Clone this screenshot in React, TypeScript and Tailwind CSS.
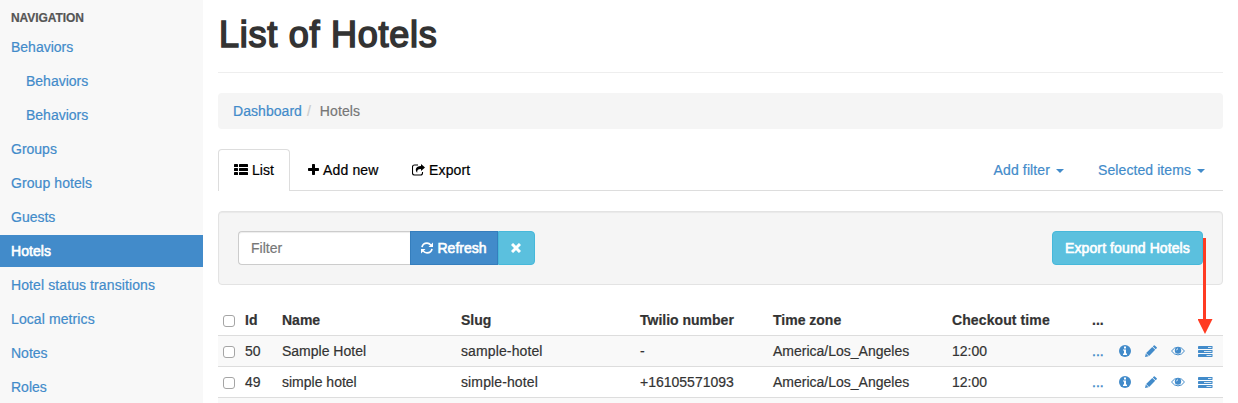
import type { ReactNode } from 'react';

const navItems = [
  { label: 'Behaviors', spacing: 'tracking-[0]' },
  { label: 'Behaviors', nested: true, spacing: 'tracking-[0]' },
  { label: 'Behaviors', nested: true, spacing: 'tracking-[0]' },
  { label: 'Groups', spacing: 'tracking-[0]' },
  { label: 'Group hotels', spacing: 'tracking-[0.08px]' },
  { label: 'Guests', spacing: 'tracking-[0]' },
  { label: 'Hotels', active: true, spacing: 'tracking-[0.05px]' },
  { label: 'Hotel status transitions', spacing: 'tracking-[0.1px]' },
  { label: 'Local metrics', spacing: 'tracking-[0.1px]' },
  { label: 'Notes', spacing: 'tracking-[0]' },
  { label: 'Roles', spacing: 'tracking-[0]' },
];

const hotels = [
  { id: 50, name: 'Sample Hotel', slug: 'sample-hotel', phone: '-' },
  { id: 49, name: 'simple hotel', slug: 'simple-hotel', phone: '+16105571093' },
];

const columns = 'grid grid-cols-[27px_37px_179px_179px_133px_179px_140px_27px_26px_26px_27px_1fr]';

function ThListIcon() {
  return (
    <svg width="14" height="12" viewBox="0 0 14 12" fill="currentColor">
      {[0, 4, 8].map((y) => (
        <g key={y}>
          <rect x="0" y={y} width="4" height="3" rx="0.6" />
          <rect x="5" y={y} width="9" height="3" rx="0.6" />
        </g>
      ))}
    </svg>
  );
}

function PlusIcon() {
  return (
    <svg width="11" height="11" viewBox="0 0 11 11" fill="currentColor">
      <path d="M4.7 0h1.6q.7 0 .7.7V4h3.3q.7 0 .7.7v1.6q0 .7-.7.7H7v3.3q0 .7-.7.7H4.7q-.7 0-.7-.7V7H.7Q0 7 0 6.300V4.700Q0 4 .7 4H4V.7Q4 0 4.700 0z" />
    </svg>
  );
}

function ShareIcon() {
  return (
    <svg width="13" height="12" viewBox="0 0 13 12" fill="none">
      <path d="M6 1H2.500Q.5 1 .5 3v6q0 2 2 2H8.500q2 0 2-2V8" stroke="currentColor" strokeWidth="1.100" />
      <path d="M9 0l4 3.400-4 3.500V4.900C6.300 4.800 4.900 5.600 5.200 8.700 2.700 6.200 3.400 2 9 2z" fill="currentColor" />
    </svg>
  );
}

function RefreshIcon() {
  return (
    <svg width="12" height="12" viewBox="0 0 12 12" fill="none">
      <path d="M1 5.200Q1.800 1.200 6 1.200 8.200 1.200 9.800 3M11 6.800Q10.200 10.800 6 10.800 3.800 10.800 2.200 9" stroke="currentColor" strokeWidth="1.700" />
      <path d="M12 .5V5H7.500zM0 11.500V7h4.500z" fill="currentColor" />
    </svg>
  );
}

function CloseIcon() {
  return (
    <svg width="10" height="10" viewBox="0 0 10 10" stroke="currentColor" strokeWidth="3" strokeLinecap="butt">
      <path d="M1 1l8 8M9 1L1 9" />
    </svg>
  );
}

function InfoIcon() {
  return (
    <svg width="12" height="12" viewBox="0 0 12 12">
      <circle cx="6" cy="6" r="6" fill="currentColor" />
      <path d="M5 1.500h2v2H5zM4 4.500h3v4h1V10H4V8.500h1v-3H4z" fill="#fff" />
    </svg>
  );
}

function PencilIcon() {
  return (
    <svg width="12" height="12" viewBox="0 0 12 12" fill="currentColor">
      <path d="M8.800 .4q.5-.5 1 0L11.700 2.300q.5.500 0 1l-1 1L7.800 1.400zM7.300 1.900l2.900 2.900-6.100 6.100L1.100 7.900zM.8 8.400l2.800 2.800L0 12z" />
    </svg>
  );
}

function EyeIcon() {
  return (
    <svg width="14" height="10" viewBox="0 0 14 10" fill="none">
      <path d="M.5 5Q3.200 1.200 7 1.200T13.500 5Q10.800 8.900 7 8.900T.5 5z" stroke="currentColor" strokeWidth="1" />
      <circle cx="7" cy="4.500" r="3.200" fill="currentColor" />
      <path d="M5.500 4.300Q5.700 2.900 7 2.700" stroke="#fff" strokeWidth=".8" />
    </svg>
  );
}

function TasksIcon() {
  return (
    <svg width="15" height="11" viewBox="0 0 15 11">
      {[0, 4, 8].map((y) => (
        <rect key={y} x="0" y={y} width="14.500" height="3" rx=".4" fill="currentColor" />
      ))}
      <path d="M10 1.500h3.500M6 5.500h7.500M8.500 9.500h5" stroke="#fff" strokeWidth=".8" />
    </svg>
  );
}

function Caret() {
  return <span className="mt-[2px] border-x-4 border-t-4 border-x-transparent border-t-[#428bca]" />;
}

function Checkbox() {
  return (
    <input
      type="checkbox"
      className="mt-px ml-[5px] h-3 w-3 appearance-none rounded-[3px] border border-[#a5a5a5] bg-white"
    />
  );
}

function Row({ children, className }: { children: ReactNode; className: string }) {
  return <div className={`${columns} items-center ${className}`}>{children}</div>;
}

export default function App() {
  return (
    <div className="flex h-[403px] w-[1238px] overflow-hidden bg-white font-['Liberation_Sans',Arial,sans-serif] text-[14px] leading-5 text-[#333] [-webkit-text-stroke:0.2px_currentColor]">
      <aside className="w-[203px] shrink-0 bg-[#f8f8f8]">
        <h2 className="h-[31px] pt-[8px] pl-[11px] text-[12px] font-bold text-[#555]">
          <span className="tracking-[-0.08px]">NAVIGATION</span>
        </h2>
        <nav className="flex flex-col gap-[2px]">
          {navItems.map((item, i) => (
            <a
              key={i}
              className={`flex h-8 items-center ${item.nested ? 'pl-[26px]' : 'pl-[11px]'} ${
                item.active ? 'bg-[#428bca] text-white [-webkit-text-stroke:0.6px_white]' : 'text-[#428bca] [-webkit-text-stroke:0.2px_#428bca]'
              } ${item.spacing}`}
            >
              {item.label}
            </a>
          ))}
        </nav>
      </aside>

      <main className="ml-[15px] w-[1005px] shrink-0">
        <header className="h-[73px] border-b border-[#eee] pt-[15px]">
          <h1 className="pl-px text-[36px] leading-10 tracking-[0.75px] [-webkit-text-stroke:1.6px_#333]">List of Hotels</h1>
        </header>

        <div className="mt-5 flex h-9 items-center rounded bg-[#f5f5f5] px-[15px]">
          <a className="tracking-[0.05px] text-[#428bca] [-webkit-text-stroke:0.2px_#428bca]">Dashboard</a>
          <span className="pr-[9px] pl-[5px] text-[#ccc] [-webkit-text-stroke:0.2px_#ccc]">/</span>
          <span className="text-[#777] tracking-[0.1px] [-webkit-text-stroke:0.2px_#777]">Hotels</span>
        </div>

        <div className="mt-5 flex h-[42px] border-b border-[#ddd] text-black">
          <div className="-mb-px flex w-[72px] items-center gap-1 rounded-t border border-b-0 border-[#ddd] bg-white pb-[2px] pl-[15px]">
            <ThListIcon />
            List
          </div>
          <div className="ml-[18px] flex w-[104px] items-center gap-1 tracking-[0.15px]">
            <PlusIcon />
            Add new
          </div>
          <div className="flex items-center gap-1 tracking-[0.15px]">
            <ShareIcon />
            Export
          </div>
          <div className="ml-auto flex items-center gap-[34px] pr-[18px] text-[#428bca] [-webkit-text-stroke:0.2px_#428bca]">
            <span className="flex items-center gap-[6px] tracking-[0.12px]">
              Add filter
              <Caret />
            </span>
            <span className="flex items-center gap-[6px] tracking-[0.08px]">
              Selected items
              <Caret />
            </span>
          </div>
        </div>

        <div className="mt-5 flex h-[74px] items-center justify-between rounded border border-[#e3e3e3] bg-[#f5f5f5] px-[19px] shadow-[inset_0_1px_1px_rgba(0,0,0,0.05)]">
          <div className="flex h-[34px]">
            <input
              placeholder="Filter"
              className="w-[172px] rounded-l border border-r-0 border-[#ccc] bg-white px-3 shadow-[inset_0_1px_1px_rgba(0,0,0,0.075)] [-webkit-text-stroke:0.2px_#777] placeholder:text-[#777]"
            />
            <button className="flex w-[88px] items-center justify-center gap-1 border border-[#357ebd] bg-[#428bca] text-white [-webkit-text-stroke:0.6px_white]">
              <RefreshIcon />
              Refresh
            </button>
            <button className="flex w-[37px] items-center justify-center rounded-r border border-[#46b8da] bg-[#5bc0de] pr-px text-white">
              <CloseIcon />
            </button>
          </div>
          <div className="relative">
            <button className="h-[34px] w-[151px] rounded border border-[#46b8da] bg-[#5bc0de] tracking-[0.1px] text-white [-webkit-text-stroke:0.6px_white]">
              Export found Hotels
            </button>
            <svg className="absolute top-[7px] left-[146px] z-10" width="15" height="96" viewBox="0 0 15 96" fill="#ff3b22">
              <path d="M5 0h3v81H14.500L7 96-.5 81H5z" />
            </svg>
          </div>
        </div>

        <section className="mt-5">
          <Row className="h-[30px] font-bold">
            <Checkbox />
            <span>Id</span>
            <span>Name</span>
            <span>Slug</span>
            <span>Twilio number</span>
            <span>Time zone</span>
            <span className="tracking-[0.1px]">Checkout time</span>
            <span>...</span>
          </Row>
          {hotels.map((hotel, i) => (
            <Row
              key={hotel.id}
              className={`h-[31px] border-t border-[#ddd] ${i % 2 === 0 ? 'bg-[#f9f9f9]' : 'bg-white'}`}
            >
              <Checkbox />
              <span>{hotel.id}</span>
              <span>{hotel.name}</span>
              <span className="tracking-[0.12px]">{hotel.slug}</span>
              <span>{hotel.phone}</span>
              <span>America/Los_Angeles</span>
              <span>12:00</span>
              <span className="text-[#428bca] [-webkit-text-stroke:0.4px_#428bca]">...</span>
              <span className="text-[#428bca]"><InfoIcon /></span>
              <span className="text-[#428bca]"><PencilIcon /></span>
              <span className="text-[#428bca]"><EyeIcon /></span>
              <span className="text-[#428bca]"><TasksIcon /></span>
            </Row>
          ))}
          <div className="h-[6px] border-t border-[#ddd] bg-[#f9f9f9]" />
        </section>
      </main>
    </div>
  );
}
